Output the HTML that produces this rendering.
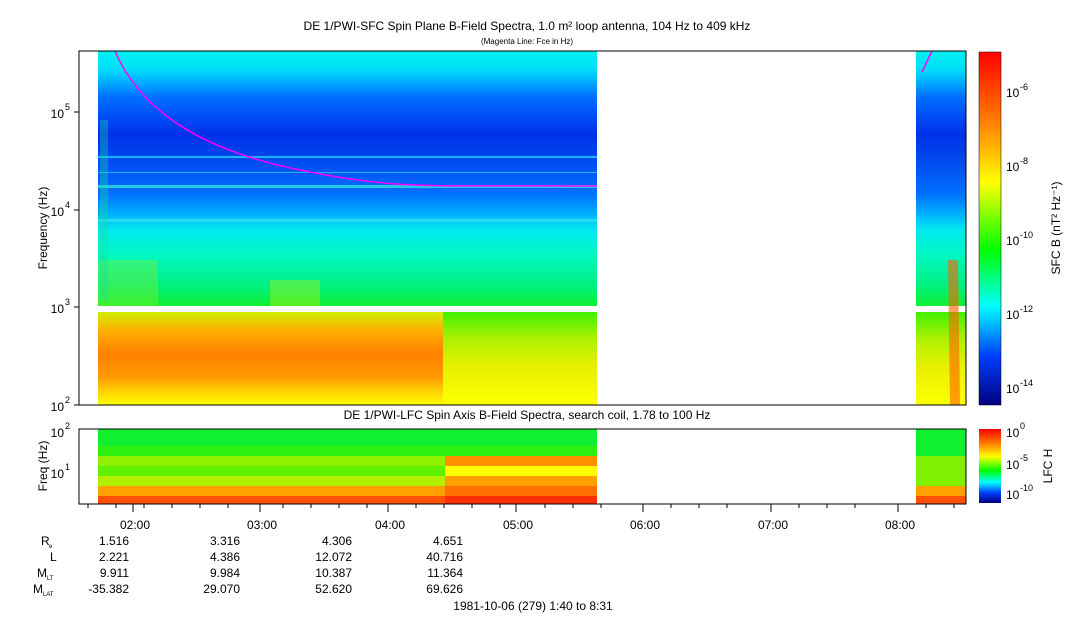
<!DOCTYPE html>
<html><head><meta charset="utf-8"><style>
body{margin:0;background:#fff;}
svg{display:block;font-family:"Liberation Sans",sans-serif;}
</style></head><body>
<svg width="1083" height="620" viewBox="0 0 1083 620" xmlns="http://www.w3.org/2000/svg">
<defs>
<linearGradient id="top" x1="0" y1="51" x2="0" y2="306" gradientUnits="userSpaceOnUse">
<stop offset="0" stop-color="#00f0f0"/>
<stop offset="0.07" stop-color="#00e0f8"/>
<stop offset="0.12" stop-color="#00b0ff"/>
<stop offset="0.18" stop-color="#0070ff"/>
<stop offset="0.25" stop-color="#0050f8"/>
<stop offset="0.33" stop-color="#0030e8"/>
<stop offset="0.45" stop-color="#0050f0"/>
<stop offset="0.56" stop-color="#0070ff"/>
<stop offset="0.62" stop-color="#00a0ff"/>
<stop offset="0.7" stop-color="#00e8f0"/>
<stop offset="0.8" stop-color="#00f8c0"/>
<stop offset="0.92" stop-color="#00f080"/>
<stop offset="1" stop-color="#10f030"/>
</linearGradient>
<linearGradient id="botL" x1="0" y1="312" x2="0" y2="405" gradientUnits="userSpaceOnUse">
<stop offset="0" stop-color="#d0f000"/>
<stop offset="0.2" stop-color="#ffb000"/>
<stop offset="0.45" stop-color="#ff8000"/>
<stop offset="0.7" stop-color="#ff9a00"/>
<stop offset="0.85" stop-color="#ffd000"/>
<stop offset="1" stop-color="#ffff00"/>
</linearGradient>
<linearGradient id="botR" x1="0" y1="312" x2="0" y2="405" gradientUnits="userSpaceOnUse">
<stop offset="0" stop-color="#40f000"/>
<stop offset="0.3" stop-color="#b0f000"/>
<stop offset="0.6" stop-color="#e8f000"/>
<stop offset="1" stop-color="#ffff00"/>
</linearGradient>
<linearGradient id="cb" x1="0" y1="52" x2="0" y2="405" gradientUnits="userSpaceOnUse">
<stop offset="0" stop-color="#ff0000"/>
<stop offset="0.2" stop-color="#ff8000"/>
<stop offset="0.37" stop-color="#ffff00"/>
<stop offset="0.56" stop-color="#00ff00"/>
<stop offset="0.72" stop-color="#00ffff"/>
<stop offset="0.86" stop-color="#0040ff"/>
<stop offset="1" stop-color="#000080"/>
</linearGradient>
<linearGradient id="cb2" x1="0" y1="429" x2="0" y2="503" gradientUnits="userSpaceOnUse">
<stop offset="0" stop-color="#ff0000"/>
<stop offset="0.2" stop-color="#ff8000"/>
<stop offset="0.37" stop-color="#ffff00"/>
<stop offset="0.56" stop-color="#00ff00"/>
<stop offset="0.72" stop-color="#00ffff"/>
<stop offset="0.86" stop-color="#0040ff"/>
<stop offset="1" stop-color="#000080"/>
</linearGradient>
</defs>
<text x="527" y="30" font-size="12" text-anchor="middle">DE 1/PWI-SFC  Spin Plane B-Field Spectra, 1.0 m² loop antenna, 104 Hz to 409 kHz</text>
<text x="527" y="44" font-size="8" text-anchor="middle">(Magenta Line: Fce in Hz)</text>
<rect x="98" y="51" width="499" height="255" fill="url(#top)"/>
<rect x="916" y="51" width="50" height="255" fill="url(#top)"/>
<rect x="98" y="312" width="345" height="93" fill="url(#botL)"/>
<rect x="443" y="312" width="154" height="93" fill="url(#botR)"/>
<rect x="916" y="312" width="50" height="93" fill="url(#botR)"/>
<path d="M948,260 L958,260 L960,405 L950,405 Z" fill="#ff6000" opacity="0.6"/>
<rect x="98" y="156" width="499" height="2" fill="#20d0f0" opacity="0.8"/>
<rect x="98" y="172" width="499" height="1" fill="#20d0f0" opacity="0.8"/>
<rect x="98" y="185" width="499" height="3" fill="#30e0e0" opacity="0.8"/>
<rect x="98" y="219" width="499" height="3" fill="#30e0f0" opacity="0.8"/>
<rect x="98" y="260" width="60" height="46" fill="#90f020" opacity="0.35"/>
<rect x="270" y="280" width="50" height="26" fill="#d0f000" opacity="0.35"/>
<rect x="100" y="120" width="8" height="180" fill="#10e0a0" opacity="0.35"/>
<path d="M115,51 C140,110 200,150 300,170 S420,185 597,186" fill="none" stroke="#ff00ff" stroke-width="1.5"/>
<path d="M922,72 L932,51" stroke="#ff00ff" stroke-width="1.5"/>
<rect x="79" y="51" width="887" height="354" fill="none" stroke="#000"/>
<g stroke="#000">
<line x1="74" y1="112" x2="79" y2="112"/><line x1="74" y1="210" x2="79" y2="210"/><line x1="74" y1="307" x2="79" y2="307"/><line x1="74" y1="405" x2="79" y2="405"/>
</g>
<g font-size="12" text-anchor="end">
<text x="64" y="118">10</text><text x="64" y="216">10</text><text x="64" y="313">10</text><text x="64" y="411">10</text>
</g>
<g font-size="9"><text x="65" y="110">5</text><text x="65" y="208">4</text><text x="65" y="305">3</text><text x="65" y="403">2</text></g>
<text transform="translate(47,228) rotate(-90)" font-size="12" text-anchor="middle">Frequency (Hz)</text>
<rect x="979" y="52" width="22" height="353" fill="url(#cb)"/>
<rect x="979" y="52" width="22" height="353" fill="none" stroke="#000" stroke-width="0.5"/>
<g font-size="12"><text x="1006" y="97">10</text><text x="1006" y="171">10</text><text x="1006" y="245">10</text><text x="1006" y="319">10</text><text x="1006" y="393">10</text></g>
<g font-size="9"><text x="1020" y="90">-6</text><text x="1020" y="164">-8</text><text x="1020" y="238">-10</text><text x="1020" y="312">-12</text><text x="1020" y="386">-14</text></g>
<text transform="translate(1060,228) rotate(-90)" font-size="12" text-anchor="middle">SFC B (nT² Hz⁻¹)</text>
<text x="527" y="419" font-size="12" text-anchor="middle">DE 1/PWI-LFC  Spin Axis B-Field Spectra, search coil, 1.78 to 100 Hz</text>
<g>
<rect x="98" y="429" width="499" height="17" fill="#10f030"/>
<rect x="98" y="446" width="499" height="10" fill="#30f010"/>
<rect x="98" y="456" width="499" height="10" fill="#90f000"/>
<rect x="98" y="466" width="499" height="10" fill="#60f000"/>
<rect x="98" y="476" width="499" height="10" fill="#b0f000"/>
<rect x="98" y="486" width="499" height="10" fill="#ffa000"/>
<rect x="98" y="496" width="499" height="8" fill="#ff5000"/>
<rect x="445" y="456" width="152" height="10" fill="#ff9000"/>
<rect x="445" y="466" width="152" height="10" fill="#ffff00"/>
<rect x="445" y="476" width="152" height="10" fill="#ffa000"/>
<rect x="445" y="486" width="152" height="10" fill="#ff7000"/>
<rect x="445" y="496" width="152" height="8" fill="#ff3000"/>
<rect x="916" y="429" width="50" height="27" fill="#10f030"/>
<rect x="916" y="456" width="50" height="30" fill="#80f000"/>
<rect x="916" y="486" width="50" height="10" fill="#ffa000"/>
<rect x="916" y="496" width="50" height="8" fill="#ff5000"/>
</g>
<rect x="79" y="429" width="887" height="75" fill="none" stroke="#000"/>
<g font-size="12" text-anchor="end"><text x="64" y="437">10</text><text x="64" y="478">10</text></g>
<g font-size="9"><text x="65" y="429">2</text><text x="65" y="470">1</text></g>
<text transform="translate(47,466) rotate(-90)" font-size="12" text-anchor="middle">Freq (Hz)</text>
<rect x="979" y="429" width="22" height="74" fill="url(#cb2)"/>
<g font-size="12"><text x="1006" y="437">10</text><text x="1006" y="469">10</text><text x="1006" y="499">10</text></g>
<g font-size="9"><text x="1020" y="429">0</text><text x="1020" y="461">-5</text><text x="1020" y="491">-10</text></g>
<text transform="translate(1052,466) rotate(-90)" font-size="12" text-anchor="middle">LFC H</text>
<g stroke="#000">
<line x1="88" y1="504" x2="88" y2="508"/><line x1="116" y1="504" x2="116" y2="508"/><line x1="133" y1="504" x2="133" y2="512"/><line x1="144" y1="504" x2="144" y2="508"/><line x1="172" y1="504" x2="172" y2="508"/><line x1="200" y1="504" x2="200" y2="508"/><line x1="228" y1="504" x2="228" y2="508"/><line x1="260" y1="504" x2="260" y2="512"/><line x1="283" y1="504" x2="283" y2="508"/><line x1="311" y1="504" x2="311" y2="508"/><line x1="339" y1="504" x2="339" y2="508"/><line x1="367" y1="504" x2="367" y2="508"/><line x1="388" y1="504" x2="388" y2="512"/><line x1="416" y1="504" x2="416" y2="508"/><line x1="444" y1="504" x2="444" y2="508"/><line x1="472" y1="504" x2="472" y2="508"/><line x1="500" y1="504" x2="500" y2="508"/><line x1="516" y1="504" x2="516" y2="512"/><line x1="545" y1="504" x2="545" y2="508"/><line x1="573" y1="504" x2="573" y2="508"/><line x1="601" y1="504" x2="601" y2="508"/><line x1="643" y1="504" x2="643" y2="512"/><line x1="671" y1="504" x2="671" y2="508"/><line x1="699" y1="504" x2="699" y2="508"/><line x1="727" y1="504" x2="727" y2="508"/><line x1="771" y1="504" x2="771" y2="512"/><line x1="799" y1="504" x2="799" y2="508"/><line x1="827" y1="504" x2="827" y2="508"/><line x1="855" y1="504" x2="855" y2="508"/><line x1="898" y1="504" x2="898" y2="512"/><line x1="926" y1="504" x2="926" y2="508"/><line x1="954" y1="504" x2="954" y2="508"/>
</g>
<g font-size="12" text-anchor="end">
<text x="150" y="529">02:00</text><text x="277" y="529">03:00</text><text x="405" y="529">04:00</text><text x="533" y="529">05:00</text><text x="660" y="529">06:00</text><text x="788" y="529">07:00</text><text x="915" y="529">08:00</text>
<text x="129" y="545">1.516</text><text x="240" y="545">3.316</text><text x="352" y="545">4.306</text><text x="463" y="545">4.651</text>
<text x="129" y="561">2.221</text><text x="240" y="561">4.386</text><text x="352" y="561">12.072</text><text x="463" y="561">40.716</text>
<text x="129" y="577">9.911</text><text x="240" y="577">9.984</text><text x="352" y="577">10.387</text><text x="463" y="577">11.364</text>
<text x="129" y="593">-35.382</text><text x="240" y="593">29.070</text><text x="352" y="593">52.620</text><text x="463" y="593">69.626</text>
</g>
<g font-size="12"><text x="41" y="545">R</text><text x="50" y="561">L</text><text x="37" y="577">M</text><text x="33" y="593">M</text></g>
<g font-size="6"><text x="49" y="548">e</text><text x="47" y="580">LT</text><text x="43" y="596">LAT</text></g>
<text x="533" y="610" font-size="12" text-anchor="middle">1981-10-06 (279) 1:40 to 8:31</text>
</svg>
</body></html>
